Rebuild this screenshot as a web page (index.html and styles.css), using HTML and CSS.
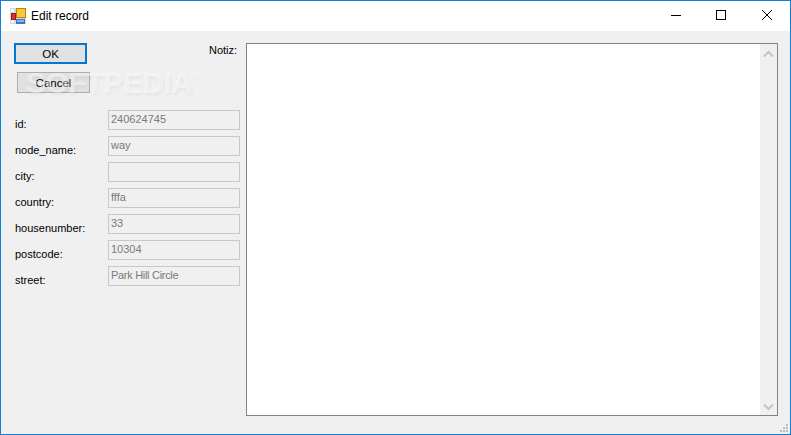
FILE: index.html
```html
<!DOCTYPE html>
<html lang="en">
<head>
<meta charset="utf-8">
<title>Edit record</title>
<link rel="stylesheet" href="styles.css">
</head>
<body>
<div class="window">
  <header class="titlebar">
    <svg class="app-icon" width="16" height="16" viewBox="0 0 16 16">
      <rect x="0" y="0" width="16" height="16" fill="#d8d8d8"/>
      <rect x="1" y="1" width="3" height="3" fill="#f6f6f6"/>
      <rect x="1" y="12" width="3" height="3" fill="#f6f6f6"/>
      <rect x="6" y="0" width="10" height="10" fill="#b8860b"/>
      <rect x="7" y="1" width="8" height="8" fill="#fbc73e"/>
      <rect x="1" y="5" width="5" height="7" fill="#8a1f1f"/>
      <rect x="2" y="6" width="3" height="5" fill="#d8342c"/>
      <rect x="6" y="11" width="9" height="5" fill="#3f73c4"/>
      <rect x="7" y="12" width="7" height="2" fill="#8db4ea"/>
    </svg>
    <span class="title">Edit record</span>
    <div class="controls">
      <svg class="ctl" width="46" height="30" viewBox="0 0 46 30"><path d="M19 14.5h10" stroke="#000" fill="none"/></svg>
      <svg class="ctl" width="46" height="30" viewBox="0 0 46 30"><rect x="18.5" y="9.5" width="9" height="9" stroke="#000" fill="none"/></svg>
      <svg class="ctl" width="46" height="30" viewBox="0 0 46 30"><path d="M18 9l10 10M28 9l-10 10" stroke="#000" fill="none"/></svg>
    </div>
  </header>
  <main class="client">
    <section class="left">
      <button class="btn btn-default">OK</button>
      <button class="btn btn-cancel">Cancel</button>
      <div class="fields">
        <label class="lbl">id:</label><div class="inp">240624745</div>
        <label class="lbl">node_name:</label><div class="inp">way</div>
        <label class="lbl">city:</label><div class="inp"></div>
        <label class="lbl">country:</label><div class="inp">fffa</div>
        <label class="lbl">housenumber:</label><div class="inp">33</div>
        <label class="lbl">postcode:</label><div class="inp">10304</div>
        <label class="lbl">street:</label><div class="inp inp-narrow">Park Hill Circle</div>
      </div>
    </section>
    <span class="notiz">Notiz:</span>
    <div class="memo">
      <div class="scrollbar">
        <svg width="17" height="17" viewBox="0 0 17 17"><path d="M4 12.5l4.5-4.5 4.5 4.5" stroke="#c4c4c4" stroke-width="2" fill="none"/></svg>
        <svg width="17" height="17" viewBox="0 0 17 17"><path d="M4 6.5l4.5 4.5 4.5-4.5" stroke="#c4c4c4" stroke-width="2" fill="none"/></svg>
      </div>
    </div>
    <div class="watermark">SOFTPEDIA<sup class="reg">®</sup></div>
    <svg class="grip" width="8" height="8" viewBox="0 0 8 8" fill="#bdbdbd">
      <rect x="6" y="0" width="2" height="2"/>
      <rect x="3" y="3" width="2" height="2"/><rect x="6" y="3" width="2" height="2"/>
      <rect x="0" y="6" width="2" height="2"/><rect x="3" y="6" width="2" height="2"/><rect x="6" y="6" width="2" height="2"/>
    </svg>
  </main>
</div>
</body>
</html>
```
FILE: styles.css
```css
html, body {
  margin: 0;
  padding: 0;
  width: 791px;
  height: 435px;
  overflow: hidden;
}
body {
  font-family: "Liberation Sans", Arial, sans-serif;
  font-size: 11px;
  color: #000;
}
.window {
  box-sizing: border-box;
  width: 791px;
  height: 435px;
  border: 1px solid #0f80d8;
  display: flex;
  flex-direction: column;
  background: #f0f0f0;
}
.titlebar {
  height: 30px;
  flex: none;
  background: #fff;
  display: flex;
  align-items: center;
  padding-left: 9px;
}
.app-icon { flex: none; margin-top: -1px; }
.title { margin-left: 5px; font-size: 12px; margin-top: -1px; }
.controls { margin-left: auto; display: flex; }
.ctl { display: block; }
.client {
  position: relative;
  flex: 1;
  display: flex;
  align-items: flex-start;
  padding: 12px 12px 18px 13px;
  min-height: 0;
}
.left {
  width: 226px;
  flex: none;
  display: flex;
  flex-direction: column;
  align-items: flex-start;
}
.btn {
  display: block;
  box-sizing: border-box;
  font: inherit;
  font-size: 11.5px;
  color: #000;
  background: #e1e1e1;
  padding: 0;
  text-align: center;
}
.btn-default {
  width: 73px;
  height: 21px;
  border: 2px solid #0078d7;
}
.btn-cancel {
  width: 73px;
  height: 21px;
  margin: 8px 0 0 3px;
  border: 1px solid #adadad;
}
.fields {
  margin-top: 17px;
  display: grid;
  grid-template-columns: 94px 132px;
  grid-auto-rows: 20px;
  row-gap: 6px;
}
.lbl {
  padding: 6px 0 0 1px;
  line-height: 16px;
  white-space: nowrap;
}
.inp {
  box-sizing: border-box;
  height: 20px;
  border: 1px solid #c8c8c8;
  background: #f0f0f0;
  color: #7a7a7a;
  padding: 0 0 0 2px;
  line-height: 16px;
  white-space: nowrap;
}
.inp-narrow { letter-spacing: -0.3px; }
.notiz {
  position: absolute;
  left: 208px;
  top: 11px;
  line-height: 16px;
}
.memo {
  flex: 1;
  align-self: stretch;
  margin-left: 6px;
  box-sizing: border-box;
  border: 1px solid #828282;
  background: #fff;
  display: flex;
  justify-content: flex-end;
}
.scrollbar {
  width: 17px;
  background: #f0f0f0;
  display: flex;
  flex-direction: column;
  justify-content: space-between;
}
.scrollbar svg { display: block; }
.watermark {
  position: absolute;
  left: 25px;
  top: 36px;
  font-family: "Liberation Sans", sans-serif;
  font-weight: 700;
  font-size: 30px;
  line-height: 32px;
  letter-spacing: -0.6px;
  color: rgba(255, 255, 255, 0.45);
  text-shadow: 1px 2px 3px rgba(0, 0, 0, 0.05);
  pointer-events: none;
  white-space: nowrap;
}
.reg {
  font-size: 9px;
  font-weight: 400;
  vertical-align: 14px;
  line-height: 0;
}
.grip {
  position: absolute;
  right: 2px;
  bottom: 2px;
}
```
